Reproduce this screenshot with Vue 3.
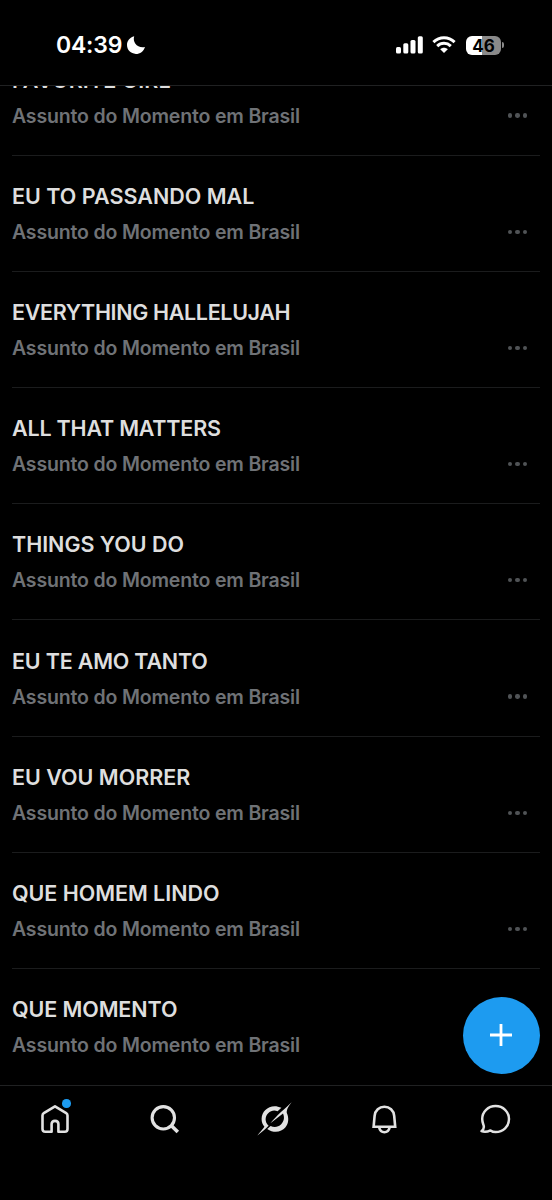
<template>
  <div class="screen">
    <header class="status-bar">
      <div class="clock">
        <span class="time">04:39</span>
        <svg class="moon" width="20" height="20" viewBox="0 0 20 20">
          <path d="M8.2 1.2C6.2 7.2 11.6 13.6 19 11.9C17.6 16.3 14 18.9 9.9 18.9C4.9 18.9 1 15 1 10.1C1 5.8 3.8 2.3 8.2 1.2Z" fill="#fff" />
        </svg>
      </div>
      <div class="indicators">
        <svg class="signal" width="28" height="18" viewBox="0 0 28 18" fill="#fff">
          <rect x="0" y="11" width="5" height="6.5" rx="1.5" />
          <rect x="7.3" y="7.3" width="5" height="10.2" rx="1.5" />
          <rect x="14.5" y="4" width="5" height="13.5" rx="1.5" />
          <rect x="21.8" y="0.2" width="5" height="17.3" rx="1.5" />
        </svg>
        <svg class="wifi" width="24" height="18" viewBox="0 0 24 18">
          <g fill="none" stroke="#fff" stroke-width="3">
            <path d="M1.4 6.2C7.5 0.4 16.5 0.4 22.6 6.2" />
            <path d="M5.2 10.1C9.1 6.4 14.9 6.4 18.8 10.1" />
          </g>
          <path d="M8.2 13.2C10.3 11.2 13.7 11.2 15.8 13.2L12 17.1Z" fill="#fff" />
        </svg>
        <div class="battery">
          <span>46</span>
        </div>
        <i class="battery-tip"></i>
      </div>
    </header>

    <main class="trends">
      <ul>
        <li v-for="trend in trends" :key="trend.name" class="trend">
          <div>
            <h2 :style="{ letterSpacing: trend.spacing + 'px' }">{{ trend.name }}</h2>
            <p>Assunto do Momento em Brasil</p>
          </div>
          <button class="more" aria-label="Mais">
            <i></i><i></i><i></i>
          </button>
        </li>
      </ul>
    </main>

    <button class="compose" aria-label="Postar">
      <svg width="24" height="24" viewBox="0 0 24 24">
        <path d="M12 1V23M1 12H23" stroke="#fff" stroke-width="2.8" />
      </svg>
    </button>

    <nav class="tabs">
      <a class="tab">
        <svg width="34" height="34" viewBox="0 0 34 34" fill="none" stroke="#e2e2e2" stroke-width="2.6" stroke-linejoin="round">
          <path d="M17 4.4L28.2 11.2Q29.5 12 29.5 13.6V26.9Q29.5 29.7 26.7 29.7H20.4V22.1Q20.4 18.9 17 18.9Q13.6 18.9 13.6 22.1V29.7H7.3Q4.5 29.7 4.5 26.9V13.6Q4.5 12 5.8 11.2Z" />
        </svg>
        <i class="badge"></i>
      </a>
      <a class="tab">
        <svg width="34" height="34" viewBox="0 0 34 34" fill="none" stroke="#e2e2e2" stroke-width="3.1">
          <circle cx="15.3" cy="15.8" r="11.2" />
          <path d="M23.2 23.5L29.8 30.1" stroke-width="3.6" />
        </svg>
      </a>
      <a class="tab">
        <svg width="38" height="38" viewBox="0 0 38 38" fill="#e2e2e2">
          <path d="M25.4 7.8C15.4 3 5.6 9.6 5.6 19C5.6 22.2 6.6 24.6 8.4 26.8C7 28.8 4.4 31.6 1.4 35.6C5 32.8 9 29.6 12.6 25.8C8.6 21.9 8.8 16.6 12.2 13.2C14.9 10.5 18.2 10 21.6 11.2Z" />
          <path d="M14.4 23.2L27 13.6C28.8 17.8 28 21.4 25.2 24.2C22.2 27.2 18.2 27.6 14.6 26L11.2 29C18 33.6 25.4 32.1 29.3 27.6C33.1 23.1 32.8 17.4 30.9 13.3C30.2 10.2 32 6.8 35.6 2.2C29.8 7.9 20.2 15.8 14.4 23.2Z" />
        </svg>
      </a>
      <a class="tab">
        <svg width="34" height="34" viewBox="0 0 34 34" fill="none" stroke="#e2e2e2" stroke-width="2.6">
          <path d="M5.6 24.8L6.6 13.8C7.1 8.3 11.2 4.7 16.4 4.7S25.7 8.3 26.2 13.8L27.2 24.8Z" />
          <path d="M11 25C11.8 28.5 13.7 30.2 16.4 30.2S21 28.5 21.8 25" />
        </svg>
      </a>
      <a class="tab">
        <svg width="34" height="34" viewBox="0 0 34 34" fill="none" stroke="#e2e2e2" stroke-width="2.5" stroke-linejoin="round">
          <path d="M3.5 29.2C5.6 27.6 6.2 26 5.7 23.7C4.9 21.2 4.2 19.5 4.2 17.1C4.2 9.8 10.1 4.1 17.6 4.1S31 9.8 31 17.1S25.1 30 17.6 30C15.7 30 14 29.5 12.5 28.4C9.5 29.9 6.2 30.2 3.5 29.2Z" />
        </svg>
      </a>
    </nav>
  </div>
</template>

<script setup>
// spacing: letter-spacing of each title, in px
const trends = [
  { name: 'FAVORITE GIRL', spacing: 0.15 },
  { name: 'EU TO PASSANDO MAL', spacing: 0.02 },
  { name: 'EVERYTHING HALLELUJAH', spacing: -0.34 },
  { name: 'ALL THAT MATTERS', spacing: -0.2 },
  { name: 'THINGS YOU DO', spacing: -0.03 },
  { name: 'EU TE AMO TANTO', spacing: -0.2 },
  { name: 'EU VOU MORRER', spacing: 0 },
  { name: 'QUE HOMEM LINDO', spacing: -0.04 },
  { name: 'QUE MOMENTO', spacing: -0.1 },
];
</script>

<style>
body {
  margin: 0;
  background: #000;
}
</style>

<style scoped>
.screen {
  position: relative;
  display: flex;
  flex-direction: column;
  height: 1200px;
  overflow: hidden;
  background: #000;
  color: #dedede;
  font-family: Inter, 'Liberation Sans', sans-serif;
}

.status-bar {
  display: flex;
  justify-content: space-between;
  box-sizing: border-box;
  height: 86px;
  padding: 30px 48px 0 56px;
  border-bottom: 1px solid #202122;
}

.clock,
.indicators {
  display: flex;
  align-items: center;
  height: 30px;
}

.time {
  color: #fff;
  font-size: 23px;
  font-weight: 600;
  letter-spacing: -0.2px;
}

.moon {
  margin-left: 4px;
}

.wifi {
  margin-left: 8px;
}

.battery {
  width: 35px;
  height: 19px;
  margin-left: 10px;
  border-radius: 6px;
  background: linear-gradient(90deg, #fff 47%, #8a8a8a 47%);
  color: #000;
  font-size: 17px;
  font-weight: 700;
  line-height: 20px;
  text-align: center;
}

.battery-tip {
  width: 2px;
  height: 6px;
  margin-left: 1px;
  border-radius: 0 2px 2px 0;
  background: #8a8a8a;
}

.trends {
  height: 999px;
  overflow: hidden;
}

ul {
  margin: -46.6px 12px 0;
  padding: 0;
  list-style: none;
}

.trend {
  display: flex;
  justify-content: space-between;
  box-sizing: border-box;
  height: 116.2px;
  padding-top: 25.2px;
  border-bottom: 1px solid #1b1c1d;
}

.trend:last-child {
  border-bottom: 0;
}

h2,
p {
  margin: 0;
  white-space: nowrap;
}

h2 {
  font-size: 21.5px;
  font-weight: 600;
  line-height: 30px;
}

p {
  margin-top: 6px;
  color: #6f7276;
  font-size: 19.5px;
  font-weight: 600;
  letter-spacing: -0.17px;
  line-height: 30px;
}

button {
  border: 0;
  padding: 0;
}

.more {
  display: flex;
  gap: 3px;
  align-items: center;
  height: 10px;
  margin: 46px 13px 0 0;
  background: none;
}

.more i {
  width: 4.3px;
  height: 4.3px;
  border-radius: 50%;
  background: #505356;
}

.compose {
  position: absolute;
  right: 12.5px;
  bottom: 126.5px;
  display: flex;
  align-items: center;
  justify-content: center;
  width: 77px;
  height: 77px;
  border-radius: 50%;
  background: #1d9bf0;
}

.tabs {
  display: grid;
  grid-template-columns: repeat(5, 110px);
  flex: 1;
  border-top: 1px solid #202122;
}

.tab {
  position: relative;
  display: flex;
  align-items: center;
  justify-content: center;
  height: 66px;
}

.badge {
  position: absolute;
  top: 13px;
  left: 62px;
  width: 8.5px;
  height: 8.5px;
  border-radius: 50%;
  background: #1d9bf0;
}
</style>
